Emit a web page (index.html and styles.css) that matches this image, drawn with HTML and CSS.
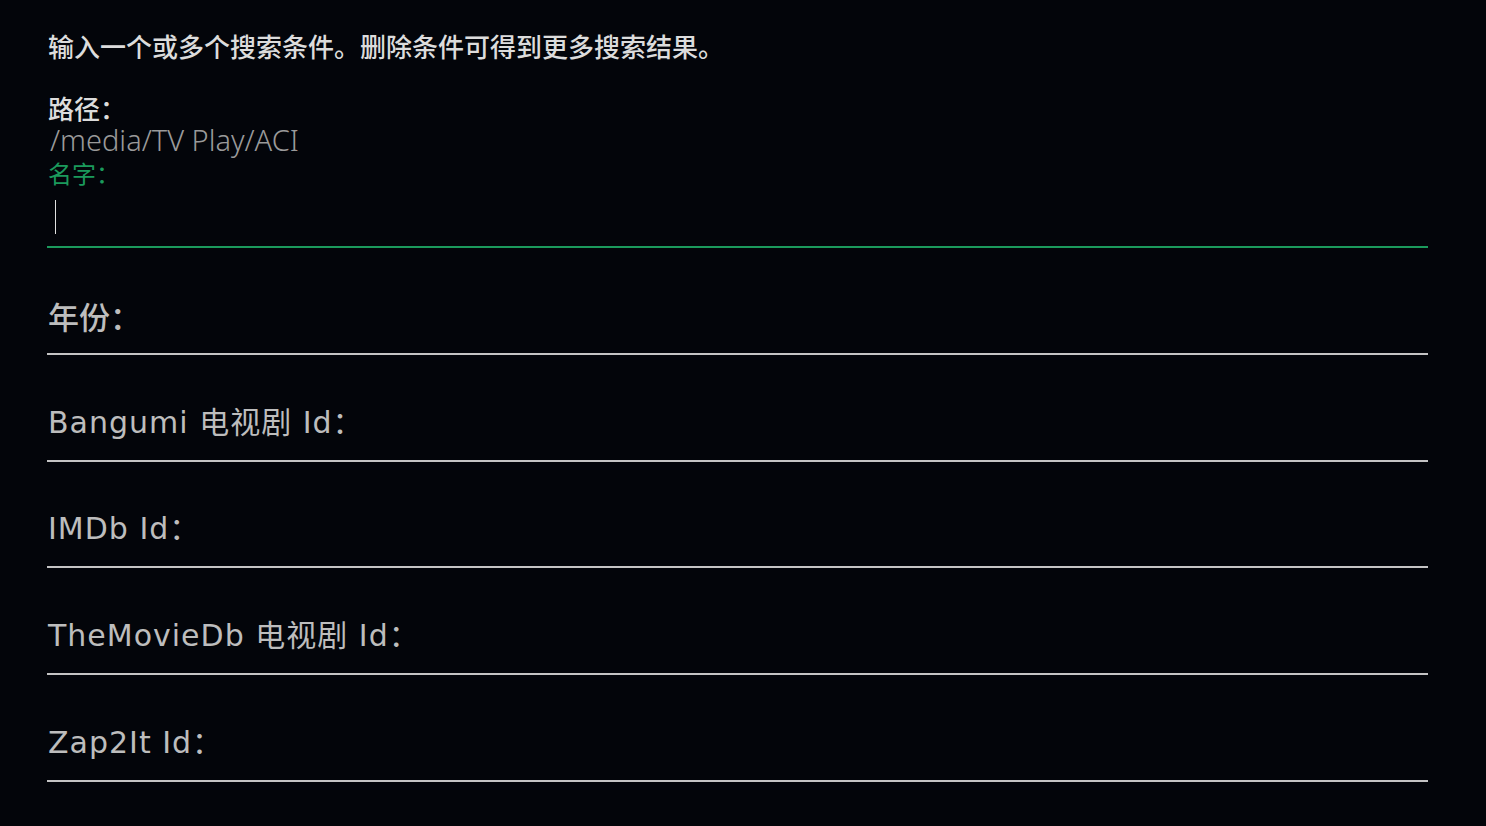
FILE: index.html
```html
<!DOCTYPE html>
<html lang="zh-CN">
    <head>
        <meta charset="utf-8" />
        <title>搜索</title>
        <link rel="stylesheet" href="styles.css">
    </head>
    <body>
        <div id="page-content">
            <p class="intro">输入一个或多个搜索条件。删除条件可得到更多搜索结果。</p>

            <div class="pathInfo">
                <div class="pathLabel">路径：</div>
                <div class="pathValue">/media/TV Play/ACI</div>
            </div>

            <div class="field focused">
                <label class="fieldLabel" for="name">名字：</label>
                <div class="inputLine"><span class="caret"></span></div>
            </div>

            <div class="field">
                <label class="fieldLabel cjk">年份：</label>
            </div>
            <div class="field">
                <label class="fieldLabel">Bangumi 电视剧 Id：</label>
            </div>
            <div class="field">
                <label class="fieldLabel">IMDb Id：</label>
            </div>
            <div class="field">
                <label class="fieldLabel">TheMovieDb 电视剧 Id：</label>
            </div>
            <div class="field">
                <label class="fieldLabel">Zap2It Id：</label>
            </div>
        </div>
    </body>
</html>
```

FILE: styles.css
```css
/* body props */
body {
    background-color:   #03050a;
    margin:             0;
    font-family:        "Noto Sans", "Noto Sans CJK SC", sans-serif;
    color:              #d8d8d8;
}
#page-content {
    padding:            30px 58px 0 47px;
}
.intro {
    margin:             0 0 0 1px;
    font-family:        "Noto Sans CJK SC", sans-serif;
    font-size:          26px;
    font-weight:        500;
    line-height:        32px;
    color:              #dcdcdc;
}
.pathInfo {
    margin:             31px 0 0 1px;
}
.pathLabel {
    font-family:        "Noto Sans CJK SC", sans-serif;
    font-size:          26px;
    font-weight:        500;
    line-height:        30px;
    color:              #dcdcdc;
}
.pathValue {
    font-size:          29px;
    font-weight:        300;
    line-height:        34px;
    color:              #9a9a9a;
    margin-left:        2px;
}

/* search fields */
.field {
    height:             104.75px;
    border-bottom:      2px solid #c4c4c4;
    display:            flex;
    flex-direction:     column;
    justify-content:    flex-end;
    padding-left:       1px;
}
.field .fieldLabel {
    font-family:        "DejaVu Sans", "Noto Sans CJK SC", sans-serif;
    font-size:          30px;
    letter-spacing:     1px;
    line-height:        34px;
    color:              #bdbdbd;
    padding-bottom:     20px;
}
.field .fieldLabel.cjk {
    font-family:        "Noto Sans CJK SC", sans-serif;
    font-size:          31px;
    letter-spacing:     0;
    font-weight:        500;
}
.field.focused {
    height:             auto;
    border-bottom-color: #1b9a5c;
    justify-content:    flex-start;
}
.field.focused .fieldLabel {
    font-family:        "Noto Sans CJK SC", sans-serif;
    font-size:          24px;
    letter-spacing:     0;
    line-height:        26px;
    margin-top:         3px;
    color:              #1b9a5c;
    padding-bottom:     0;
}
.inputLine {
    height:             60px;
    padding:            14px 0 0 7px;
    box-sizing:         border-box;
}
.caret {
    display:            inline-block;
    width:              1px;
    height:             34px;
    background-color:   #e0e0e0;
}
```
